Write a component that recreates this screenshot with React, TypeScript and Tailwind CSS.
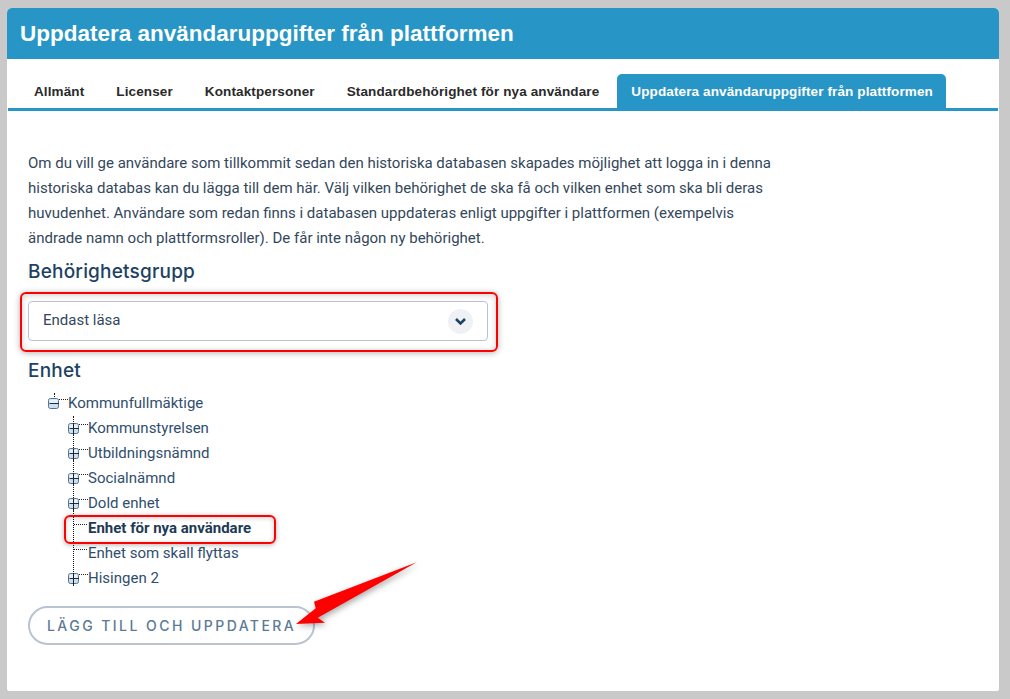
import React from "react";

function Box({ open }: { open?: boolean }) {
  return (
    <svg width="22" height="14" viewBox="0 0 22 14" className="shrink-0 block">
      <rect x="0.5" y="1.5" width="10" height="10" rx="2" fill="#cfdeeb" stroke="#4f7595" />
      <rect x="1.5" y="2.5" width="8" height="3.5" fill="#e9f0f6" />
      <path d="M1.5 6.5H11" stroke="#1b2f40" strokeWidth="1" />
      {!open && <path d="M5.5 2V14" stroke="#1b2f40" strokeWidth="1" />}
      <path d="M11 2.5H20" stroke="#222" strokeWidth="1" strokeDasharray="1 1" />
    </svg>
  );
}

function Row({ label, leaf, bold }: { label: string; leaf?: boolean; bold?: boolean }) {
  return (
    <div className="flex items-center h-[25px]">
      {leaf ? (
        <svg width="22" height="14" viewBox="0 0 22 14" className="shrink-0 block">
          <path d="M6 2.5H20" stroke="#222" strokeWidth="1" strokeDasharray="1 1" />
        </svg>
      ) : (
        <Box />
      )}
      <span className={bold ? "font-bold text-[#1e3a55] ml-[-2px]" : "ml-[-2px]"}>{label}</span>
    </div>
  );
}

export default function App() {
  return (
    <div className="w-[1010px] h-[699px] bg-[#c9c9c9] pt-2 pl-[7px] overflow-hidden font-['Roboto',sans-serif]">
      <div className="relative w-[992px] h-[683px] bg-white rounded-t-[5px] rounded-b-[2px]">
        <div className="h-[51px] bg-[#2796c6] rounded-t-[5px] pl-[13px] flex items-center">
          <h1 className="text-white font-bold text-[22.5px] font-['Liberation_Sans',sans-serif]">
            Uppdatera användaruppgifter från plattformen
          </h1>
        </div>

        <div className="mt-[15px] ml-px mr-px h-[37px] border-b-[3px] border-[#2796c6] flex pl-[26px] font-['Liberation_Sans',sans-serif] font-bold text-[13.5px] tracking-[0.12px] text-[#2a2a2a]">
          <div className="pt-[3px] flex items-center">Allmänt</div>
          <div className="pt-[3px] ml-[32px] flex items-center">Licenser</div>
          <div className="pt-[3px] ml-[32px] flex items-center">Kontaktpersoner</div>
          <div className="pt-[3px] ml-[32px] flex items-center">Standardbehörighet för nya användare</div>
          <div className="pt-[3px] ml-[18px] pl-[14px] pr-[13px] flex items-center bg-[#2796c6] text-white rounded-t-[5px]">
            Uppdatera användaruppgifter från plattformen
          </div>
        </div>

        <div className="pl-[21px]">
          <p className="mt-[40px] w-[750px] text-[15px] leading-[25px] text-[#33475b]">
            Om du vill ge användare som tillkommit sedan den historiska databasen skapades möjlighet att logga in i denna
            historiska databas kan du lägga till dem här. Välj vilken behörighet de ska få och vilken enhet som ska bli deras
            huvudenhet. Användare som redan finns i databasen uppdateras enligt uppgifter i plattformen (exempelvis
            ändrade namn och plattformsroller). De får inte någon ny behörighet.
          </p>

          <h2 className="mt-[8px] text-[19px] tracking-[0.2px] leading-[26px] font-medium text-[#1d4263] font-['Inter',sans-serif]">Behörighetsgrupp</h2>

          <div className="mt-[16px] w-[460px] h-[40px] border border-[#b9c3cf] rounded-[4px] flex items-center pl-[14px] pr-[14px] justify-between text-[15px] text-[#33475b]">
            <span className="pb-[2px]">Endast läsa</span>
            <span className="w-[25px] h-[25px] rounded-full bg-[#eff1f4] flex items-center justify-center">
              <svg width="13" height="9" viewBox="0 0 13 9">
                <path d="M2 2L6.5 6.5L11 2" fill="none" stroke="#1d4263" strokeWidth="2.6" />
              </svg>
            </span>
          </div>

          <h2 className="mt-[17px] text-[19px] tracking-[0.2px] leading-[26px] font-medium text-[#1d4263] font-['Inter',sans-serif]">Enhet</h2>

          <div className="relative mt-[7px] ml-[20px] text-[15px] text-[#2f4e6d]">
            <div className="absolute left-[6px] top-[2px] h-[4px] border-l border-dotted border-[#111]" />
            <div className="flex items-center h-[25px]">
              <Box open />
              <span className="ml-[-2px]">Kommunfullmäktige</span>
            </div>
            <div className="relative pl-[20px]">
              <Row label="Kommunstyrelsen" />
              <Row label="Utbildningsnämnd" />
              <Row label="Socialnämnd" />
              <Row label="Dold enhet" />
              <Row label="Enhet för nya användare" leaf bold />
              <Row label="Enhet som skall flyttas" leaf />
              <Row label="Hisingen 2" />
              <div className="absolute left-[25px] top-[0px] h-[168px] border-l border-dotted border-[#111]" />
            </div>
          </div>

          <button className="mt-[15px] w-[287px] h-[39px] rounded-full border-2 border-[#b8c4d0] text-[14px] font-medium tracking-[2.45px] text-[#5b7a95] font-['Inter',sans-serif] flex items-center pl-[17px]">
            LÄGG TILL OCH UPPDATERA
          </button>
        </div>

        {/* annotations */}
        <div className="absolute left-[13px] top-[284px] w-[478px] h-[60px] border-2 border-[#f00] rounded-[6px] shadow-[0_1px_6px_rgba(0,0,0,0.3),inset_0_1px_6px_rgba(0,0,0,0.2)]" />
        <div className="absolute left-[57px] top-[507px] w-[212px] h-[29px] border-2 border-[#f00] rounded-[6px] shadow-[0_1px_5px_rgba(0,0,0,0.3),inset_0_1px_5px_rgba(0,0,0,0.2)]" />
        <svg className="absolute left-[283px] top-[548px]" width="135" height="78" viewBox="0 0 135 78" style={{ filter: "drop-shadow(2px 2px 3px rgba(0,0,0,0.35))" }}>
          <path d="M126.7 6.3L24 45.7L25.7 52.3L6 68L35 66.7L27.7 61.7Z" fill="#f00" />
        </svg>
      </div>
    </div>
  );
}
